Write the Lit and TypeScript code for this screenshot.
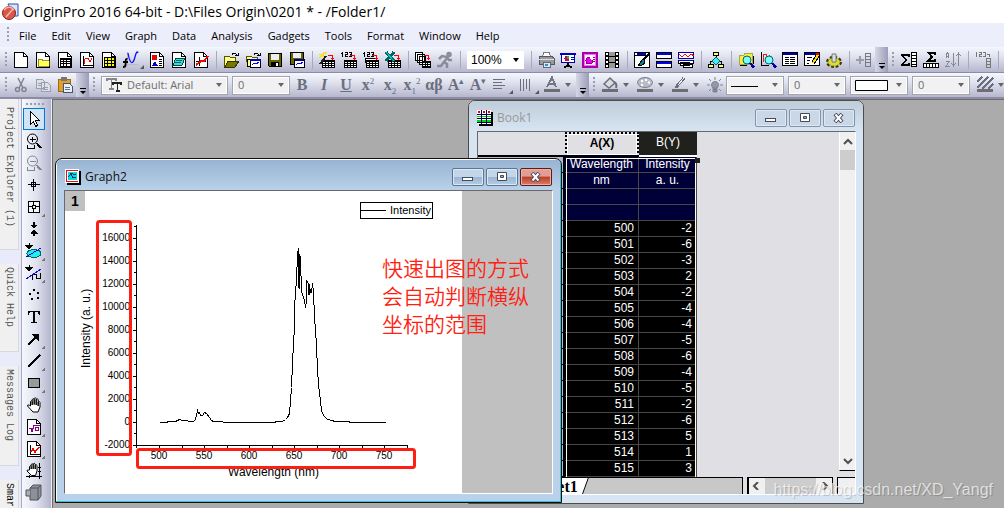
import { LitElement, html, css, svg, nothing } from "lit";
import { customElement, property } from "lit/decorators.js";

const doc = svg`<path d="M1.5.5h9l4 4v11h-13z" fill="#fff" stroke="#000"/><path d="M10.5.5v4h4" fill="none" stroke="#000"/>`;
const grid = svg`<path d="M3 6h11v9H3z" fill="#000"/><path d="M4 8h2v1H4zM7 8h2v1H7zM10 8h3v1h-3zM4 10h2v1H4zM7 10h2v1H7zM10 10h3v1h-3zM4 12h2v2H4zM7 12h2v2H7zM10 12h3v2h-3z" fill="#fff"/>`;
const sheet = svg`<path d="M3 8h13v8H3z" fill="#000"/><path d="M4 10h2v1H4zM7 10h2v1H7zM10 10h2v1h-2zM13 10h2v1h-2zM4 12h2v1H4zM7 12h2v1H7zM10 12h2v1h-2zM13 12h2v1h-2zM4 14h2v1H4zM7 14h2v1H7zM10 14h2v1h-2zM13 14h2v1h-2z" fill="#fff"/>`;
const redArrow = svg`<path d="M9 3.5h4.500v3" fill="none" stroke="#f00" stroke-width="1.500"/><path d="M11 5.500h5l-2.500 3z" fill="#f00"/>`;
const n123 = svg`<path d="M1.500 0v5M0 1.500h1M4 .5h2v2H4v2h2.500M8 .5h2.500v4H8M8.500 2.500h2" fill="none" stroke="#000"/>`;
const bar = (c: string) => svg`<path d="M0 12h16v3H0z" fill=${c}/>`;
const corner = svg`<path d="M19 14v4h-4z" fill="#777"/>`;
const magnifier = svg`<circle cx="9" cy="8" r="4" fill="#7ff" stroke="#066" shape-rendering="auto"/><path d="M12 11l4 4.500" stroke="#00a" stroke-width="2.500"/>`;

const icons: Record<string, unknown> = {
  app: svg`<g shape-rendering="auto"><path d="M6 0h10v12h-4z" fill="#dbe6fa" stroke="#2450b4"/><circle cx="7" cy="9" r="6.500" fill="#d8574a" stroke="#8e1d16"/><path d="M2 6c3-4 7-4 10 0M4 13l7-8" stroke="#f4b8a8" stroke-width="1.500" fill="none"/></g>`,
  blank: doc,
  folder: svg`${doc}<path d="M3 7h4l1 1.500h6V14H3z" fill="#ff5" stroke="#660" stroke-width=".7"/>`,
  book: svg`${doc}${grid}`,
  graph: svg`${doc}<path d="M4.500 4v9.500H14" fill="none" stroke="#000"/><path d="M5 12l1-5 3-1 2 4 2-4" fill="none" stroke="#f00"/>`,
  matrix: svg`${doc}<path d="M3 5h11v10H3z" fill="#000"/><path d="M4 6h2v2H4zM7 6h3v2H7zM11 6h2v2h-2zM4 9h2v2H4zM7 9h3v2H7zM11 9h2v2h-2zM4 12h2v2H4zM7 12h3v2H7zM11 12h2v2h-2z" fill="#ff0"/>`,
  func: svg`<path d="M4.500 0v14M1 12.500h14" stroke="#bbb"/><g shape-rendering="auto" fill="none"><path d="M5 1c2 12 5 12 7 4s3-4 3-4" stroke="#11f" stroke-width="1.300"/><path d="M4.500 7C2 6.500 3 9 2.500 13c0 2-1 2-2.500 2M0 10h5" stroke="#000" stroke-width="1.800"/></g>`,
  layout: svg`${doc}<path d="M3 3h5v5H3z" fill="#e00"/><path d="M3 14l3-5 3 5z" fill="#00c"/><path d="M10 7.500h3M10 9.500h3M10 11.500h3M10 13.500h3" stroke="#000"/>`,
  notes: svg`${doc}<path d="M5 6h9l-3 7H2z" fill="#3dd" stroke="#044"/><path d="M5 8.500h6M4 10.500h6" stroke="#066"/>`,
  digitize: svg`${doc}<path d="M6.500 5v9M3 9.500h10" stroke="#000"/><path d="M3 13l5-4h3l4-5" fill="none" stroke="#f00" stroke-width="2"/>`,
  open: svg`<path d="M1 4h5l1 1h5v4H5l-3 6H1z" fill="#ff8" stroke="#550"/><path d="M5 9h11l-4 6H2z" fill="#770" stroke="#330"/><path d="M9 2.500c2-2 4-1.500 5 .5M12 3.500h3v-3" fill="none" stroke="#000"/>`,
  openT: svg`<path d="M1 4h5l1 1h5v4H1z" fill="#ff8" stroke="#550"/><path d="M2 7h5v7H2z" fill="#ff8" stroke="#000"/><path d="M5.500 7.500h10v8h-10z" fill="#fff" stroke="#000"/><path d="M5 7h11v2H5z" fill="#00c"/><path d="M7 13l2-2 2 1 3-2" stroke="#00f" fill="none"/><path d="M9 2.500c2-2 4-1.500 5 .5M12 3.500h3v-3" fill="none" stroke="#000"/>`,
  save: svg`<path d="M1.500 1.500h13v13h-12l-1-1z" fill="#660" stroke="#000"/><path d="M4 2h8v6H4z" fill="#eee"/><path d="M4 10h8v5H4z" fill="#000"/><path d="M9 11h2v3H9z" fill="#fff"/>`,
  saveT: svg`<path d="M1.500.5h13v12h-13z" fill="#660" stroke="#000"/><path d="M4 1h8v5H4z" fill="#eee"/><path d="M5.500 8.500h10v7h-10z" fill="#fff" stroke="#000"/><path d="M5 7h11v2H5z" fill="#008"/><path d="M7 13l2-2 2 1 3-2" stroke="#00f" fill="none"/>`,
  wizard: svg`${sheet}<path d="M0 2l8 3M4 0v7M0 6l8-6" stroke="#fd0"/><path d="M1 12l6-8" stroke="#222" stroke-width="2"/>${redArrow}`,
  import1: svg`${sheet}${n123}${redArrow}`,
  import2: svg`<path d="M2 6h11v4H2z" fill="#fff" stroke="#000"/>${sheet}${n123}${redArrow}`,
  excel: svg`${sheet}<path d="M1 0l8 9M9 0L1 9" stroke="#066" stroke-width="3"/><path d="M1 0l8 9" stroke="#0cc"/>${redArrow}`,
  batch: svg`<path d="M.5.5h7v8h-7zM2.500 2.500h7v8h-7zM4.500 4.500h6v8h-6z" fill="#fff" stroke="#000"/><path d="M7 9h9v7H7z" fill="#000"/><path d="M8 11h2v1H8zM11 11h1v1h-1zM13 11h2v1h-2zM8 13h2v1H8zM11 13h1v1h-1zM13 13h2v1h-2z" fill="#fff"/>${redArrow}`,
  run: svg`<g shape-rendering="auto" fill="none" stroke="#8a8d99" stroke-width="2.500"><circle cx="12" cy="2.500" r="1.500"/><path d="M11 5L7 10l3 2v4M7 10l-3 4H0M2 7l3-3 5 1 2 3h3"/></g>`,
  print: svg`<path d="M5.500.5h6l1 5h-8z" fill="#fff" stroke="#778"/><path d="M1 5l3-1h9l3 2v6H1z" fill="#999" stroke="#556"/><path d="M1 7h15" stroke="#ddd"/><path d="M5 10h7v5H5z" fill="#cef" stroke="#667"/><path d="M7 12h3v2H7z" fill="#48c"/>`,
  slide: svg`<path d="M0 1h16v2H0z" fill="#00c"/><path d="M1.500 2.500h13v8h-13z" fill="#fff" stroke="#00a"/><circle cx="7" cy="6.500" r="2.500" fill="#c06"/><path d="M7 4a2.500 2.500 0 0 1 2.500 2.500H7z" fill="#0c0"/><path d="M11 5.500h3M11 7.500h3" stroke="#00c"/><path d="M8 11v3M4 15.500l4-2 4 2" stroke="#000" fill="none" stroke-width="1.500"/>`,
  pink: svg`<path d="M1 1h14v14H1z" fill="#fff" stroke="#a0a" stroke-width="2"/><path d="M2.500 2.500h11v11h-11z" fill="none" stroke="#f6f"/><circle cx="7.500" cy="8.500" r="3.500" fill="#e0e" stroke="#808"/><path d="M8 5h3v3H9z" fill="#fff"/><path d="M11 5.500h2M11 7.500h2M11 9.500h2" stroke="#808"/>`,
  film: svg`<path d="M1 0h14v16H1z" fill="#000"/><path d="M2 1h2v2H2zM2 5h2v2H2zM2 9h2v2H2zM2 13h2v2H2zM12 1h2v2h-2zM12 5h2v2h-2zM12 9h2v2h-2zM12 13h2v2h-2z" fill="#fff"/><path d="M5 0h6v4H5zM5 5h6v5H5zM5 11h6v5H5z" fill="#999"/>`,
  brush: svg`<path d="M.5.5h15v15H.5z" fill="#fff" stroke="#000"/><path d="M3 1h9v2H3z" fill="#00c"/><path d="M15 2L9 8" stroke="#000" stroke-width="2"/><path d="M9 7l2 2c0 4-4 5-7 4 3-1 2-4 5-6z" fill="#088" stroke="#000"/><path d="M1 3.500h14" stroke="#000"/>`,
  split: svg`<path d="M.5.5h15v6H.5zM.5 9.500h15v6H.5z" fill="#fff" stroke="#000"/><path d="M1 1h14v2H1zM1 10h14v2H1z" fill="#00e"/>`,
  waves: svg`<path d="M.5.5h15v6H.5z" fill="#fff" stroke="#00a"/><path d="M1 2l3 3 3-3 3 3 3-3 3 2" fill="none" stroke="#f00"/><path d="M.5 8.500h15v3H.5zM2.500 10.500h9v3h-9zM5.500 12.500h9v3h-9z" fill="#fff" stroke="#000"/><path d="M1 8h14v1H1z" fill="#00c"/>`,
  tree: svg`<path d="M8 4v3M4 9.500H2.500v4M11 9.500h2.500v4" fill="none" stroke="#000"/><path d="M5.500.5h5v3h-5z" fill="#ff6" stroke="#000"/><path d="M8 5l4 4-4 4-4-4z" fill="#4ee" stroke="#066"/><path d="M.5 12.500h5v3h-5zM10.500 12.500h5v3h-5z" fill="#ff6" stroke="#000"/>`,
  zoomFolder: svg`<path d="M1 3h5l1-2h7v11H1z" fill="#fe3" stroke="#aa4"/><path d="M2 13.500h7M15.500 4v8" stroke="#000"/>${magnifier}`,
  zoomPlot: svg`<path d="M1.500 0v14M1 13.500h8" stroke="#000"/><path d="M3 10l1-8h2l1 8 3-7" stroke="#d22" fill="none"/>${magnifier}`,
  results: svg`<path d="M.5.5h15v13H.5z" fill="#fff" stroke="#000"/><path d="M1 1h14v2H1z" fill="#00a"/><path d="M3 5.500h4M8 5.500h5M3 7.500h4M8 7.500h5M3 9.500h4M8 9.500h5M3 11.500h4M8 11.500h5" stroke="#000"/>`,
  script: svg`<path d="M.5.500h15v13H.5z" fill="#fff" stroke="#000"/><path d="M1 1h14v2H1z" fill="#00a"/><path d="M3 5.500h5M3 8.500h3M3 11.500h2" stroke="#000"/><path d="M14 3L9 11" stroke="#000" stroke-width="4"/><path d="M14 3L9 11" stroke="#fd0" stroke-width="2"/><path d="M12 1h3v2h-3z" fill="#e00"/>`,
  gear: svg`<g shape-rendering="auto"><ellipse cx="8" cy="10" rx="6.500" ry="4.500" fill="#dc2" stroke="#330" stroke-width="3" stroke-dasharray="2.600 1.700"/><ellipse cx="8" cy="10" rx="6" ry="4" fill="#dd3" stroke="#882" stroke-width=".5"/><path d="M6 2h4v8H6z" fill="#ddd" stroke="#777"/></g>`,
  addCol: svg`<path d="M0 7.500h8M4 4v8" stroke="#9a9ca8" stroke-width="2"/><path d="M9.500 1.500h5v13h-5zM9 4.500h6M9 7.500h6M9 10.500h6" fill="none" stroke="#777a86" stroke-width="1.500"/>`,
  sigmaCol: svg`<path d="M8 5V3H1l4 5-4 5h7v-2" fill="none" stroke="#000" stroke-width="1.500"/><path d="M10.500.5h5v14h-5zM10 3.500h6M10 6.500h6M10 9.500h6M10 12.500h6" fill="#fff" stroke="#000"/>`,
  sigmaRow: svg`<path d="M12 3V.8H5L9 5 5 9h7V7" fill="none" stroke="#000" stroke-width="1.500"/><path d="M.5 11.500h15v4H.5zM3.500 12v4M6.500 12v4M9.500 12v4M12.500 12v4" fill="#fff" stroke="#000"/>`,
  sort: svg`<path d="M1.500 6V2l1-1 1 1v4M1 4.500h3M1 9.500h3L1 14.500h4M8.500 1v13M6.500 11l2 3 2-3M13.500 14V1M11.500 4l2-3 2 3" fill="none" stroke="#858792"/>`,
  gray123: svg`<path d="M1.500 0v5M4 .5h2v2H4v2h2.500M8 .5h2.500v4H8M12 2.500h2.500V5" fill="none" stroke="#777"/><path d="M11.500 6.500h4v9h-4zM11 9.500h5M11 12.500h5" fill="none" stroke="#777"/>`,
  cut: svg`<g shape-rendering="auto" fill="none" stroke="#80838f" stroke-width="1.500"><path d="M5 1l5 10M11 1L6 11"/><circle cx="4.500" cy="12.500" r="2"/><circle cx="11" cy="12.500" r="2"/></g>`,
  copy: svg`<path d="M1.500 2.500h6l2 2v7h-8zM6.500 5.500h6l3 3v6h-9z" fill="#dde0ea" stroke="#9a9daa"/><path d="M3 6.500h3M3 8.500h3M8 10.500h5M8 12.500h5" stroke="#9a9daa"/>`,
  paste: svg`<path d="M1 2h12v12H1z" fill="#e0a030" stroke="#a66a10"/><path d="M4 0h6v4H4z" fill="#777"/><path d="M6.500 6.500h6l3 3v6h-9z" fill="#e8f0ff" stroke="#456"/><path d="M8 10.500h5M8 12.500h5" stroke="#678"/>`,
  align: svg`<path d="M1 2.500h12M1 5.500h9M1 8.500h12M1 11.500h9" stroke="#6b6f7d"/>`,
  columns: svg`<path d="M2.500 2v12M5.500 2v12M8.500 2v10M11.500 2v12" stroke="#6b6f7d" stroke-width="1.500"/>`,
  fontColor: svg`<path d="M3 10L8 .5 12 10M4 7h7" stroke="#737786" stroke-width="2" fill="none"/>${bar("#6d6d72")}`,
  bucket: svg`<g shape-rendering="auto"><path d="M2 7l6-6 5 5-6 5z" fill="#ddd" stroke="#6b6f7d" stroke-width="1.500"/><path d="M12 5c2 1 3 3 2 6" stroke="#6b6f7d" stroke-width="2" fill="none"/></g>${bar("#6d6d72")}`,
  palette: svg`<g shape-rendering="auto"><ellipse cx="8" cy="5.500" rx="7.500" ry="5" fill="#b9bbc6" stroke="#7c7f8c"/><circle cx="5" cy="4" r="1.200" fill="#fff"/><circle cx="9" cy="3" r="1.200" fill="#fff"/><circle cx="12" cy="5.500" r="1.200" fill="#fff"/><circle cx="5" cy="8" r="1.200" fill="#fff"/></g>${bar("#6d6d72")}`,
  pencil: svg`<path d="M12 1L5 9l-1 2" stroke="#6b6f7d" stroke-width="3"/><path d="M12 1L6 8" stroke="#eee"/>${bar("#6d6d72")}`,
  bulb: svg`<g shape-rendering="auto" stroke="#808390"><circle cx="8" cy="8" r="3.500" fill="#9599a6"/><path d="M6 11h4v4H6z" fill="#808390"/><path d="M8 0v3M0 8h3M13 8h3M2 2l2 2M14 2l-2 2M2 14l2-2M14 14l-2-2"/></g>`,
  hatch: svg`<path d="M0 5l5-5M0 11L11 0M5 12L16 1M11 12l5-5" stroke="#6b6f7d" stroke-width="1.500"/>${bar("#6d6d72")}`,
  tt: svg`<path d="M0 4V2h9v2M4.500 2v10M2 12h5" stroke="#888" stroke-width="1.500" fill="none"/><path d="M6 8V6h8v2M10.500 6v8M9 14h4" stroke="#222" stroke-width="1.500" fill="none"/>`,
  pointer: svg`<path d="M4.500.5v13l3-3 2 5 2-1-2-5h4z" fill="#fff" stroke="#000"/>`,
  zoomIn: svg`<g fill="none" stroke="#000"><circle cx="6.500" cy="6" r="5" shape-rendering="auto"/><path d="M4 6.500h6M6.500 4v5M1.500 12v3.500h7V12"/><path d="M10.500 10l4.500 5" stroke-width="2"/></g>`,
  zoomOut: svg`<g fill="none" stroke="#85878f"><circle cx="6.500" cy="6" r="5" shape-rendering="auto"/><path d="M4 6.500h6M1.500 12v3.500h7V12"/><path d="M10.500 10l4.500 5" stroke-width="2"/></g>`,
  cross: svg`<path d="M7.500 2v12M2 7.500h12" stroke="#000"/><path d="M5.500 5.500h4v4h-4z" fill="none" stroke="#000"/>`,
  target: svg`<path d="M2.500 2.500h11v11h-11z" fill="#f4f4fa" stroke="#000"/><path d="M3 7.500h3M10 7.500h3M7.500 3v3M7.500 10v3M6.500 6.500h3v3h-3z" fill="none" stroke="#000"/>${corner}`,
  squeeze: svg`<path d="M8 1v4M8 11v4" stroke="#000" stroke-width="2"/><path d="M4.500 3.500h7L8 7.500zM4.500 12.500h7L8 8.500z" fill="#000"/>`,
  maskA: svg`<path d="M3 0v3M0 2.500h6L3 6z" stroke="#000" fill="#000"/><ellipse cx="8" cy="10.500" rx="7" ry="4" fill="#2ee" stroke="#066"/><path d="M0 14L15 5" stroke="#00c"/>${corner}`,
  maskB: svg`<path d="M3 0v3M0 2.500h6L3 6z" stroke="#000" fill="#000"/><path d="M6.500 15V9.500h4v4h4V8" fill="none" stroke="#000"/><path d="M0 14L15 4" stroke="#11c"/>${corner}`,
  dots: svg`<path d="M7 2h2v2H7zM3 6h2v2H3zM11 5h2v2h-2zM5 11h2v2H5zM11 10h2v2h-2z" fill="#000"/>`,
  text: svg`<path d="M2 2h12v4h-1l-1-3H9v10h2v1H5v-1h2V3H4L3 6H2z" fill="#000"/>`,
  arrow: svg`<path d="M2 14l8-8" stroke="#000" stroke-width="2"/><path d="M5 3h8v8z" fill="#000"/>${corner}`,
  line: svg`<path d="M2 14L14 2" stroke="#000" stroke-width="1.500"/>${corner}`,
  rect: svg`<path d="M2.500 3.500h11v9h-11z" fill="#999" stroke="#000"/>${corner}`,
  hand: svg`<g shape-rendering="auto" stroke="#000"><path d="M4.500 9V4.500q1-1.500 1.700 0V8 2.500q1-1.500 2 0V7.500 1.500q1-1.500 2 0V8 2.500q1-1.500 2 0V9 5q1.500-1 1.800.5V10l-2 5H7L1.500 9q0-1.800 1.800-.8z" fill="#fff"/></g>`,
  formula: svg`${doc}<path d="M3 9.500h2l1 3 2-6h6M12.500 12V8.500h-3v3h3" fill="none" stroke="#808"/>${corner}`,
  plot: svg`${doc}<path d="M4.500 4v9.500H14" fill="none" stroke="#000"/><path d="M5 11l2-3 2 3 4-5" fill="none" stroke="#f00" stroke-width="1.500"/>${corner}`,
  handGrid: svg`<path d="M13.500 0v16M0 13.500h16M12 4.500h3M12 8.500h3M3.500 12v3" stroke="#000"/><g shape-rendering="auto" stroke="#000"><path d="M3.500 7V3.500q1-1.500 1.700 0V6 1.500q1-1.500 2 0V6 1q1-1.500 2 0V6 2.500q1-1.500 1.800 0V8l-1.500 4.500H5.500L1 8q0-1.500 1.500-.8z" fill="#fff"/></g>`,
  cube: svg`<g shape-rendering="auto" stroke="#555"><path d="M4 3l3-3h8v11l-3 4H4z" fill="#8d909c"/><path d="M4 3h8v12M12 3l3-3" fill="none"/><path d="M4 5H0v6h4" fill="#aaadb8"/></g>`,
  graphWin: svg`<path d="M2 2h14v14H2z" fill="#000"/><path d="M0 0h14v14H0z" fill="#fff"/><path d="M1 1h12v1H1zM1 1h1v12H1zM1 12h12v1H1z" fill="#d11"/><path d="M3 3h9v8H3z" fill="#0dd"/><path d="M3 8l3-3 2 4 3-1M5 4.500l6 1" stroke="#036" fill="none"/>`,
  bookWin: svg`<path d="M2 2h14v14H2z" fill="#000"/><path d="M0 0h14v14H0z" fill="#fff"/><path d="M1 1h2v2H1zM6 1h2v2H6zM11 1h2v2h-2z" fill="#e00"/><path d="M0 6h14v1H0zM0 10h14v2H0z" fill="#0d0"/><path d="M4.500 0v14M9.500 0v14M0 4.500h14M0 8.500h14M0 12.500h14" stroke="#005"/>`,
};

const icon = (name: string) =>
  html`<svg class="icon" width="16" height="16" viewBox="0 0 16 16" shape-rendering="crispEdges" fill="none" aria-hidden="true">${icons[name]}</svg>`;

const shared = css`
  :host { box-sizing: border-box; font-family: "Open Sans", "Noto Sans", sans-serif; }
  *, *::before, *::after { box-sizing: border-box; }
  button { padding: 0; border: 0; background: none; color: inherit; font: inherit; }
  .icon { display: block; flex: none; overflow: visible; }
`;

@customElement("mdi-window")
class MdiWindow extends LitElement {
  @property() heading = "";
  @property() glyph = "";
  @property({ type: Boolean, reflect: true }) active = false;

  static styles = [shared, css`
    :host {
      display: flex; flex-direction: column;
      border: 1px solid #4c4c4c; border-radius: 7px 7px 0 0;
      background: #d7e4f2; padding: 0 7px 8px 8px; overflow: hidden;
    }
    :host([active]) { border-color: #111; background: #b9d1ea; box-shadow: inset -1px -1px #2fc3dc, inset 1px 1px #fff; padding-right: 8px; }
    header {
      display: flex; align-items: center; gap: 4px; height: 30px; flex: none;
      margin: 0 -7px 0 -8px; padding: 4px 8px 0; background: linear-gradient(#bfcddb, #d7e4f2);
    }
    :host([active]) header { background: linear-gradient(#98b4d2, #b9d1ea); margin: 1px -7px 0; }
    h2 { flex: 1; margin: 0; font-size: 12px; line-height: 16px; font-weight: 400; color: #999; }
    :host([active]) h2 { color: #111; }
    .controls { display: flex; gap: 2px; }
    .controls button {
      width: 32px; height: 18px; display: grid; place-items: center;
      border: 1px solid #8394ab; border-radius: 2px; background: #c9d7e6; box-shadow: inset 0 0 0 1px #dde8f3;
    }
    :host([active]) .controls button {
      border-color: #5d7590; background: linear-gradient(#c3d5e8 48%, #9ab5d2 50%, #b5cde6);
    }
    :host([active]) .controls .close {
      border-color: #5c1d1a; background: linear-gradient(#e39d92 45%, #bb3d27 50%, #d9806c); box-shadow: inset 0 0 0 1px #e8b0a6;
    }
    .body { flex: 1; min-height: 0; border: 1px solid #696969; border-right-color: #fff; border-bottom-color: #fff; display: flex; }
    ::slotted(*) { flex: 1; min-width: 0; }
  `];

  render() {
    return html`
      <header>
        ${icon(this.glyph)}
        <h2>${this.heading}</h2>
        <div class="controls">
          <button aria-label="Minimize"><svg width="14" height="10"><rect x="1.500" y="5.500" width="10" height="3" fill="#fff" stroke="#444b5c"/></svg></button>
          <button aria-label="Maximize"><svg width="12" height="10"><path d="M1.500.5h9v8h-9z" fill="#fff" stroke="#444b5c"/><path d="M4.500 3.500h3v2h-3z" fill="#9ab" stroke="#444b5c"/></svg></button>
          <button class="close" aria-label="Close"><svg width="14" height="10" fill="none"><path d="M3 1l7 8M10 1L3 9" stroke="#444b5c" stroke-width="4"/><path d="M3.500 1.500l6 7M9.500 1.500l-6 7" stroke="#fff" stroke-width="2"/></svg></button>
        </div>
      </header>
      <div class="body"><slot></slot></div>
    `;
  }
}

// Spectrum trace: horizontal and vertical steps in thirds of a page unit.
const trace = [88,607,97,605,103,607,120,604,135,604,148,597,155,601,170,601,175,604,190,604,196,597,200,571,203,580,206,575,209,586,215,586,221,577,228,580,238,590,242,600,250,604,275,604,280,607,434,607,436,604,455,604,465,597,472,590,476,580,480,540,482,500,485,430,488,370,491,320,493,270,496,210,498,185,500,100,503,85,505,200,507,203,508,103,511,110,513,215,517,220,519,235,522,238,526,260,528,240,529,181,533,190,533,222,536,222,538,192,540,215,543,215,545,190,549,215,552,290,556,330,558,375,560,450,564,490,566,520,570,540,574,570,580,585,590,597,605,600,612,604,655,604,660,607,764,607];
const points = trace.map((v, i) => Math.round(v / 3 + (i % 2 ? 29 : 65)) + 0.5).join(" ");

@customElement("spectrum-graph")
class SpectrumGraph extends LitElement {
  static styles = [shared, css`
    :host { display: flex; position: relative; background: #c0c0c0; overflow: hidden; }
    .page { display: block; flex: none; background: #fff; }
    text { font-family: "Liberation Sans", Arial, sans-serif; font-size: 12px; fill: #000; }
    .key { font-size: 11px; }
    .tick { font-size: 10px; }
    .layer { position: absolute; left: 0; top: 0; width: 20px; height: 20px; background: #c0c0c0; font: 700 14px/20px "Liberation Sans", sans-serif; }
    .note { position: absolute; left: 317px; top: 62px; margin: 0; color: #fe1f12; font: 350 21px/28px "Noto Sans CJK SC", sans-serif; white-space: nowrap; }
  `];

  render() {
    const ys = Array.from({ length: 10 }, (_, i) => 16000 - i * 2000);
    const xs = [500, 550, 600, 650, 700, 750];
    return html`
      <svg class="page" width="397" height="304" viewBox="0 0 397 304" role="img" aria-label="Intensity against wavelength">
        <g shape-rendering="crispEdges" stroke="#000" fill="none">
          <path d="M71.500 34v220M71 254.500h272"/>
          ${ys.map((_, i) => svg`<path d="M68 ${47.5 + i * 23}h3"/>`)}
          ${ys.slice(1).map((_, i) => svg`<path d="M69 ${58.5 + i * 23}h2"/>`)}
          <path d="M69 35.500h2"/>
          ${xs.map((_, i) => svg`<path d="M${94.5 + i * 45} 255v3"/><path d="M${117.5 + i * 45} 255v2"/>`)}
          <path d="M71.500 255v2M295.500 11.500h72v16h-72zM296 19.500h25"/>
        </g>
        <polyline points=${points} fill="none" stroke="#000" shape-rendering="crispEdges"/>
        ${ys.map((v, i) => svg`<text class="tick" x="65" y=${50 + i * 23} text-anchor="end">${v}</text>`)}
        ${xs.map((v, i) => svg`<text class="tick" x=${94 + i * 45} y="268" text-anchor="middle">${v}</text>`)}
        <text class="key" x="325" y="23">Intensity</text>
        <text x="163" y="285">Wavelength (nm)</text>
        <text transform="translate(25 177) rotate(-90)">Intensity (a. u.)</text>
        <g fill="none" stroke="#fe1f12" stroke-width="3">
          <rect x="32.500" y="30.500" width="33" height="233" rx="2"/>
          <rect x="72.500" y="258.500" width="277" height="18" rx="2"/>
        </g>
      </svg>
      <button class="layer" aria-label="Layer 1">1</button>
      <p class="note">快速出图的方式<br>会自动判断横纵<br>坐标的范围</p>
    `;
  }
}

const readings = [-2, -6, -3, 2, -2, -4, -4, -5, -6, -4, -5, -2, -6, 5, 1, 3];

@customElement("data-sheet")
class DataSheet extends LitElement {
  static styles = [shared, css`
    :host { display: flex; flex-direction: column; background: #e0dfe4; font-family: "Liberation Sans", Arial, sans-serif; }
    .top { flex: 1; min-height: 0; display: flex; }
    .cells { flex: 1; position: relative; overflow: hidden; }
    table { border-collapse: separate; border-spacing: 0; table-layout: fixed; width: 219px; font-size: 12px; line-height: 15px; }
    th, td { padding: 0 4px; height: 16px; font-weight: 400; white-space: nowrap; }
    thead th { height: 25px; border-bottom: 2px solid #000; font-size: 12px; padding-bottom: 2px; }
    thead .a { font-weight: 700; border: 2px dotted #000; border-bottom-style: solid; outline: 1px solid #fff; outline-offset: -3px; }
    thead .b { background: #20201c; color: #fff; border-bottom: 2px solid #fff; }
    tbody th { background: #b6b6cc; border-right: 2px solid #000; border-bottom: 1px solid #000; }
    tbody td { background: #000; color: #fff; text-align: right; border-right: 1px solid #484848; border-bottom: 1px solid #484848; }
    tbody .label td { background: #000038; text-align: center; padding: 0 2px; }
    .rowhead { width: 87px; } .colA { width: 74px; } .colB { width: 58px; }
    .selection { position: absolute; left: 88px; top: 26px; width: 130px; height: 400px; border: 1px solid #ffe; }
    .handle { position: absolute; left: 217px; top: 26px; width: 5px; height: 5px; background: #20201c; }
    .vbar { width: 16px; display: flex; flex-direction: column; align-items: center; background: #f0f0f0; border-left: 1px solid #fff; padding-top: 5px; margin-bottom: 6px; border-bottom: 1px solid #000; }
    .vbar i { width: 15px; height: 20px; background: #cdcdcd; margin-top: 3px; margin-bottom: auto; }
    .vbar button, .hbar button { width: 14px; height: 10px; display: grid; place-items: center; }
    .vbar button:last-child { margin-bottom: 4px; }
    .bottom { flex: none; height: 17px; display: flex; background: #e0dfe4; }
    .tabs { flex: 1; display: flex; padding-left: 50px; border-top: 1px solid #000; border-right: 1px solid #000; background: #c8c8c8; }
    .tab { background: #fff; height: 16px; font: 700 16px/15px "Liberation Serif", serif; width: 55px; text-align: right; padding-right: 7px; border-right: 1px solid #000; transform: skewX(-20deg); transform-origin: bottom; }
    .tab span { display: block; transform: skewX(20deg); }
    .hbar { width: 86px; margin: 0 4px; display: flex; align-items: center; background: #f0f0f0; border: 1px solid #000; border-width: 1px 1px 0 2px; }
    .hbar i { flex: 1; height: 16px; background: #cdcdcd; margin: 0 2px; }
    .grip { width: 18px; background: #f0f0f0; border: 1px solid #000; border-width: 1px 0 0 1px; }
  `];

  render() {
    const chevron = (d: string) => html`<svg width="10" height="8" viewBox="0 0 10 8" fill="none"><path d=${d} stroke="#505050" stroke-width="2"/></svg>`;
    return html`
      <div class="top">
        <div class="cells">
          <table aria-label="Book1">
            <colgroup><col class="rowhead"><col class="colA"><col class="colB"></colgroup>
            <thead><tr><th></th><th class="a">A(X)</th><th class="b">B(Y)</th></tr></thead>
            <tbody>
              <tr class="label"><th></th><td>Wavelength</td><td>Intensity</td></tr>
              <tr class="label"><th></th><td>nm</td><td>a. u.</td></tr>
              <tr class="label"><th></th><td></td><td></td></tr>
              <tr class="label"><th></th><td></td><td></td></tr>
              ${readings.map((v, i) => html`<tr><th></th><td>${500 + i}</td><td>${v}</td></tr>`)}
              <tr><th></th><td></td><td></td></tr>
            </tbody>
          </table>
          <div class="selection"></div><div class="handle"></div>
        </div>
        <div class="vbar">
          <button aria-label="Scroll up">${chevron("M1 6l4-4 4 4")}</button><i></i>
          <button aria-label="Scroll down">${chevron("M1 2l4 4 4-4")}</button>
        </div>
      </div>
      <div class="bottom">
        <div class="tabs"><button class="tab"><span>Sheet1</span></button></div>
        <div class="hbar">
          <button aria-label="Scroll left">${chevron("M7 0L3 4l4 4")}</button><i></i>
          <button aria-label="Scroll right">${chevron("M3 0l4 4-4 4")}</button>
        </div>
        <div class="grip"></div>
      </div>
    `;
  }
}

const menus = ["File", "Edit", "View", "Graph", "Data", "Analysis", "Gadgets", "Tools", "Format", "Window", "Help"];
const tools = ["pointer", "zoomIn", "zoomOut", "cross", "target", "squeeze", "maskA", "maskB", "dots", "text", "arrow", "line", "rect", "hand", "formula", "plot", "handGrid", "cube"];

@customElement("app-root")
class AppRoot extends LitElement {
  static styles = [shared, css`
    :host { display: flex; flex-direction: column; height: 100vh; overflow: hidden; position: relative; background: #e9eafa; color: #000; }
    .title { flex: none; height: 23px; display: flex; align-items: center; gap: 5px; padding-left: 2px; background: #fff; }
    h1 { margin: 0; font-size: 14px; line-height: 20px; font-weight: 400; white-space: nowrap; }
    .menu { flex: none; height: 24px; display: flex; align-items: center; gap: 15px; padding-left: 4px; background: #edeefb; font-size: 11px; }
    .menu .grip { margin-right: -8px; }
    .toolbar { flex: none; height: 26px; display: flex; align-items: center; padding-left: 2px; background: linear-gradient(#f5f7fe, #dfe1ee 40%, #b6b7ce); border-bottom: 2px solid #8c8ca4; overflow: hidden; }
    .menu + .toolbar { border-bottom-width: 1px; }
    .tool { flex: none; width: 22px; height: 22px; display: flex; align-items: center; justify-content: center; }
    .more { width: 26px; justify-content: flex-start; padding-left: 3px; position: relative; }
    .more::after { content: ""; position: absolute; right: 2px; bottom: 2px; border: 2px solid #555; border-left-color: transparent; border-top-color: transparent; }
    .drop { width: 35px; justify-content: flex-start; gap: 5px; padding-left: 3px; }
    .drop::after, .combo::after { content: ""; border: 3px solid transparent; border-top: 4px solid #666; border-bottom: 0; }
    .sep { flex: none; width: 8px; height: 18px; background: linear-gradient(#a9a9bc, #a9a9bc) center / 1px 100% no-repeat; }
    .grip { flex: none; width: 8px; height: 16px; background: repeating-linear-gradient(#9b9cae 0 2px, transparent 2px 4px) center / 2px 100% no-repeat; }
    .cap + .grip { width: 10px; }
    .cap { flex: none; align-self: stretch; width: 13px; background: linear-gradient(90deg, #d5d6e5, #9c9db8); display: flex; flex-direction: column; align-items: center; justify-content: flex-end; gap: 2px; padding-bottom: 3px; }
    .cap::before { content: ""; width: 6px; height: 1px; background: #000; }
    .cap::after { content: ""; border: 3px solid transparent; border-top-color: #000; border-bottom: 0; }
    .combo { flex: none; width: 58px; height: 19px; display: flex; align-items: center; position: relative; padding: 0 5px; margin-right: 4px; border: 1px solid #a3a3ab; box-shadow: inset 0 0 0 1px #fff; background: #f1f1f4; }
    .combo select { flex: 1; min-width: 0; appearance: none; border: 0; padding: 0; background: none; color: #6d6d6d; font: 11px/16px "Open Sans", sans-serif; opacity: 1; }
    .combo .swatch { position: absolute; left: 4px; top: 3px; pointer-events: none; }
    .font { width: 127px; margin-left: 2px; } .font select { padding-left: 4px; }
    .size { margin-right: 1px; }
    .zoom { width: 57px; height: 18px; margin: 0 3px; padding: 0 4px 0 3px; background: #fff; border-color: #fff; }
    .zoom select { font: 12px/16px "Liberation Sans", sans-serif; color: #000; }
    .zoom::after { border-top-color: #000; }
    .char { font: 700 16px/20px "Liberation Serif", serif; color: #6b6f7d; }
    .char sup, .char sub { font-size: 9px; line-height: 0; font-weight: 400; }
    .main { flex: 1; min-height: 0; display: flex; }
    .docks { flex: none; width: 19px; display: flex; flex-direction: column; gap: 14px; }
    .dock { flex: none; writing-mode: vertical-rl; width: 19px; height: 100px; padding: 3px 0; text-align: left; background: #f0f0f0; border: 1px solid #d8d8e2; border-width: 0 1px 1px 0; color: #555; font: 10px/18px "Liberation Mono", monospace; white-space: nowrap; }
    .dock.project { height: 151px; padding-top: 8px; } .dock.help { height: 88px; }
    .dock.smart { flex: 1; color: #000; }
    .tools { flex: none; width: 30px; margin: 0 1px 0 2px; padding: 2px 2px 0 1px; display: flex; flex-direction: column; background: linear-gradient(90deg, #f6f8fe, #dfe1ee 50%, #b4b5cd); border-left: 1px solid #a9a9c0; }
    .tools::before { content: ""; flex: none; height: 2px; width: 20px; margin: 2px 0 3px 3px; background: repeating-linear-gradient(90deg, #9b9cae 0 2px, transparent 2px 4px); }
    .tools .tool.on { background: #cfe4f7; outline: 1px solid #0078d7; outline-offset: -1px; }
    .desk { flex: 1; min-width: 0; position: relative; overflow: hidden; background: #ababab; border: 1px solid #6c6c6c; border-width: 1px 0 0 1px; }
    .bookWin { position: absolute; left: 415px; top: 0; width: 396px; height: 404px; }
    .graphWin { position: absolute; left: 2px; top: 58px; width: 507px; height: 345px; }
    .mark { position: absolute; right: 11px; bottom: 9px; margin: 0; font: 16px/18px "Liberation Sans", sans-serif; color: #ffffffb0; text-shadow: 1px 1px 1px #0003; }
  `];

  private tool(name: string, kind = "") {
    return html`<button class="tool ${kind}" aria-label=${name}>${icon(name)}</button>`;
  }

  private combo(label: string, value: string, kind = "", swatch: unknown = nothing) {
    return html`<div class="combo ${kind}">${kind === "font" ? icon("tt") : nothing}<select aria-label=${label}><option>${value}</option></select>${swatch}</div>`;
  }

  render() {
    const sep = html`<span class="sep"></span>`;
    const grip = html`<span class="grip"></span>`;
    const cap = html`<button class="cap" aria-label="Toolbar options"></button>`;
    const t = (...names: string[]) => names.map((n) => this.tool(n));
    return html`
      <div class="title">${icon("app")}<h1>OriginPro 2016 64-bit - D:\\Files Origin\\0201 * - /Folder1/</h1></div>
      <nav class="menu">${grip}${menus.map((m) => html`<button>${m}</button>`)}</nav>
      <div class="toolbar">
        ${grip}${t("blank", "folder", "book", "graph", "matrix")}${this.tool("func", "more")}${t("layout", "notes", "digitize")}${sep}
        ${t("open", "openT", "save", "saveT")}${sep}
        ${t("wizard", "import1", "import2", "excel")}${sep}${t("batch", "run")}${sep}
        ${this.combo("Zoom", "100%", "zoom")}${sep}
        ${t("print", "slide", "pink", "film")}${sep}${t("brush", "split", "waves")}${sep}${t("tree")}${sep}
        ${t("zoomFolder", "zoomPlot", "results", "script", "gear")}${sep}${t("addCol")}${cap}${grip}
        ${t("sigmaCol", "sigmaRow", "sort")}${sep}${t("gray123")}${sep}
      </div>
      <div class="toolbar">
        ${grip}${t("cut", "copy", "paste")}${cap}${grip}
        ${this.combo("Font", "Default: Arial", "font")}${this.combo("Font size", "0", "size")}
        <button class="tool char">B</button><button class="tool char"><i>I</i></button><button class="tool char"><u>U</u></button>
        <button class="tool char"><span>x<sup>2</sup></span></button><button class="tool char"><span>x<sub>2</sub></span></button>
        <button class="tool char"><span>x<sub>1</sub><sup>2</sup></span></button><button class="tool char">αβ</button>
        <button class="tool char"><span>A<sup>▴</sup></span></button><button class="tool char"><span>A<sup>▾</sup></span></button>
        ${this.tool("align", "more")}${this.tool("columns", "more")}${this.tool("fontColor", "drop")}${cap}${grip}
        ${this.tool("bucket", "drop")}${this.tool("palette", "drop")}${this.tool("pencil", "drop")}${t("bulb")}
        ${this.combo("Line style", "", "", html`<svg class="swatch" width="30" height="10"><path d="M0 6.500h27" stroke="#000"/></svg>`)}
        ${this.combo("Line width", "0")}
        ${this.combo("Pattern", "", "", html`<svg class="swatch" width="34" height="11"><path d="M.5.5h32v10H.5z" fill="#fff" stroke="#000"/></svg>`)}
        ${this.combo("Pattern width", "0")}${this.tool("hatch", "drop")}
      </div>
      <div class="main">
        <div class="docks">
          <button class="dock project">Project Explorer (1)</button>
          <button class="dock help">Quick Help</button>
          <button class="dock">Messages Log</button>
          <button class="dock smart">Smar</button>
        </div>
        <div class="tools">${tools.map((n, i) => this.tool(n, i ? "" : "on"))}</div>
        <div class="desk">
          <mdi-window class="bookWin" heading="Book1" glyph="bookWin"><data-sheet></data-sheet></mdi-window>
          <mdi-window class="graphWin" heading="Graph2" glyph="graphWin" active><spectrum-graph></spectrum-graph></mdi-window>
        </div>
      </div>
      <p class="mark">https://blog.csdn.net/XD_Yangf</p>
    `;
  }
}
